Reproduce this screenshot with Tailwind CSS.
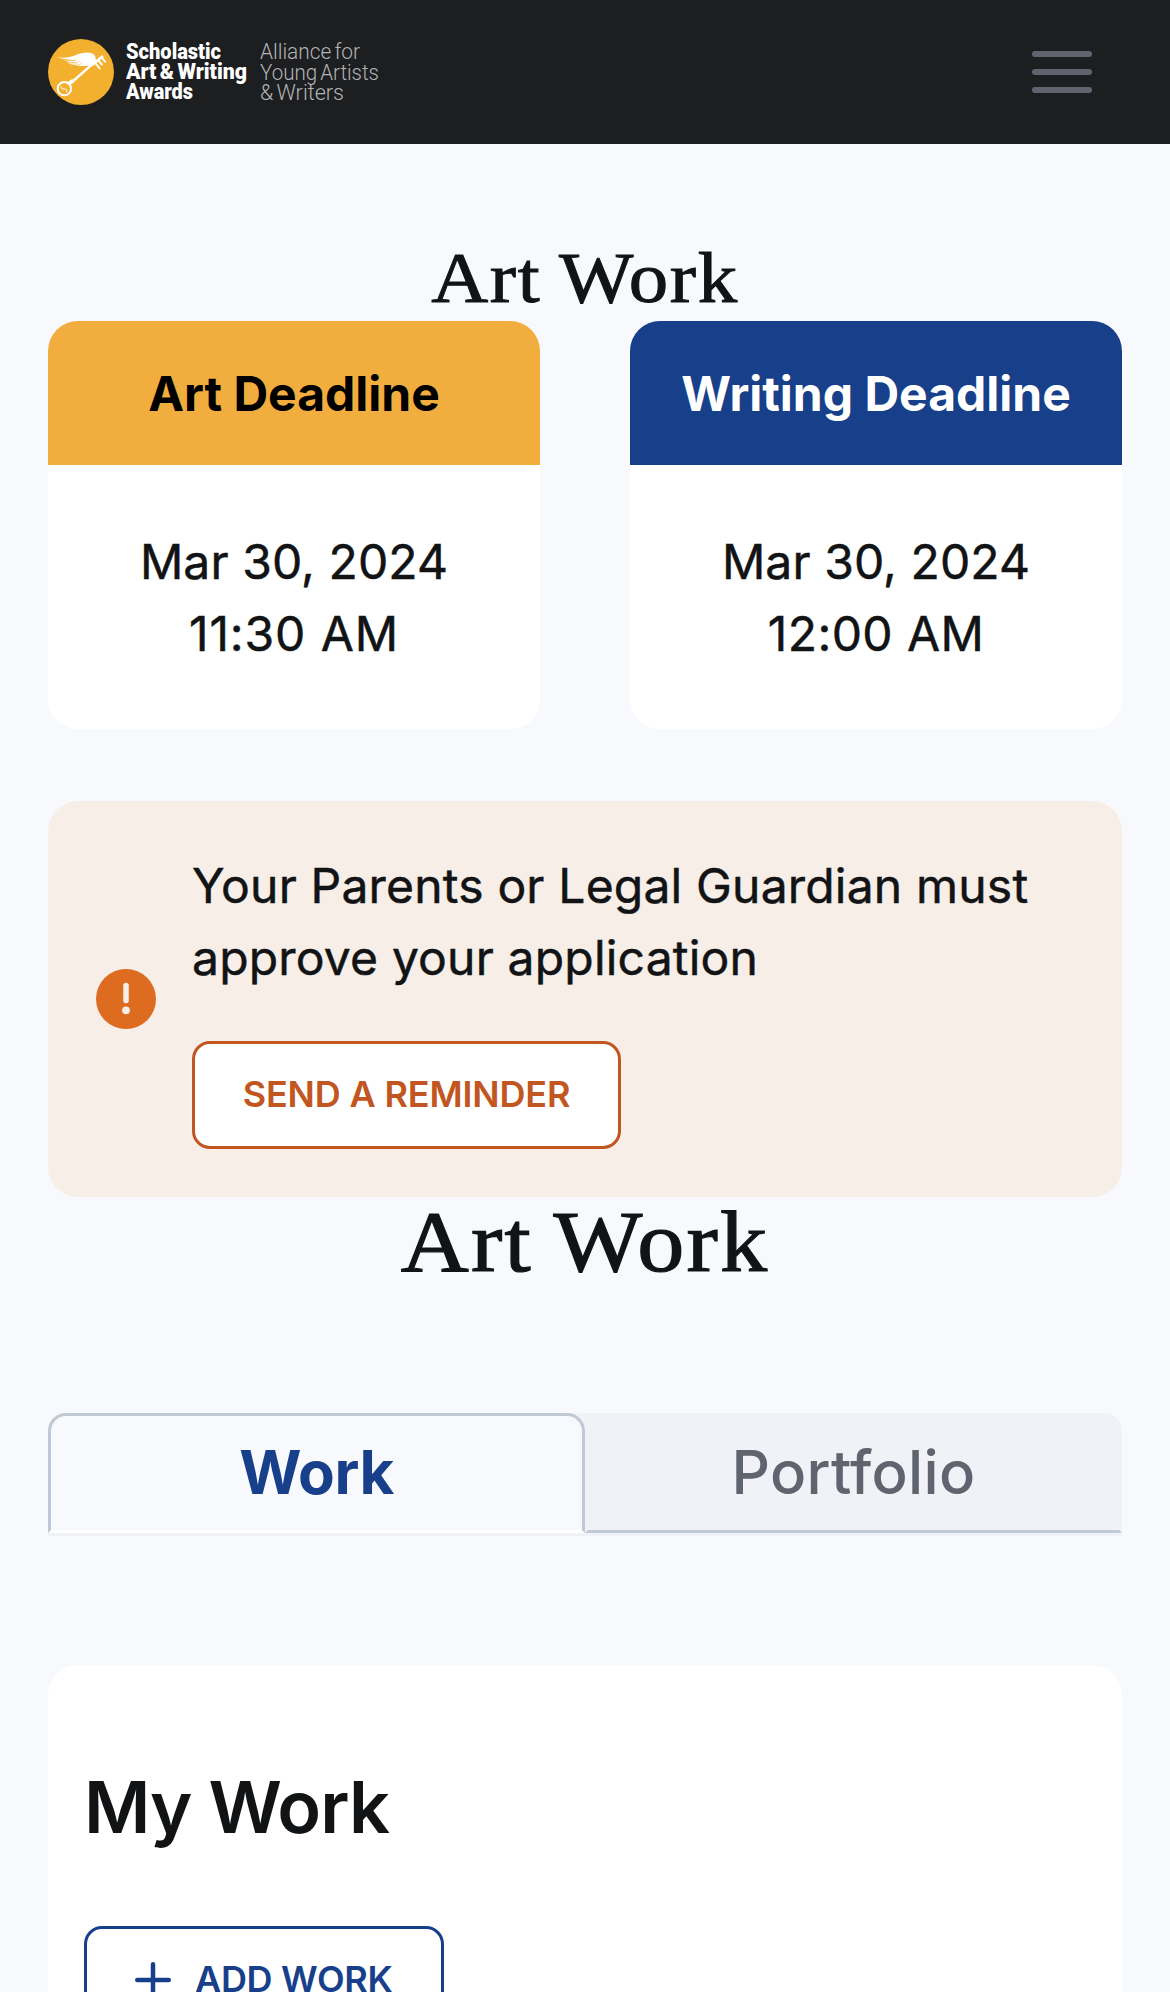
<!DOCTYPE html>
<html lang="en">
<head>
<meta charset="utf-8">
<title>Art Work</title>
<script src="https://cdn.jsdelivr.net/npm/@tailwindcss/browser@4"></script>
</head>
<body class="bg-[#f8f9fd] text-[#111315] font-['Inter',sans-serif] h-[1992px] overflow-hidden">
<header class="h-36 bg-[#1d1e20] flex items-center justify-between pl-12 pr-[78px]">
  <div class="flex items-center">
    <svg class="w-[66px] h-[66px]" viewBox="54 57 198 198">
      <circle cx="153" cy="156" r="99" fill="#f3af2e"/>
      <path fill="#fff" d="M78 111c22 4 42 2 58-5 14-6 28-9 42-8 11 1 17 6 18 13l2 10-12 14c-10 4-26 4-40 2-14-1-28-5-36-10 12 3 24 4 34 2-18 0-34-4-46-10 14 3 30 4 42 1-20 1-42-2-62-9z"/>
      <path d="M96 119c14 4 30 4 44 0M108 127c14 3 28 3 40-2M126 135c10 1 22 0 30-5" fill="none" stroke="#f3af2e" stroke-width="1.500"/>
      <g stroke="#fff" fill="none">
        <path d="M126 186L190 130" stroke-width="7"/>
        <path d="M186 135L219 108" stroke-width="8"/>
        <path d="M196 129l14 18M205 121l12 14M215 113l12 14" stroke-width="6"/>
        <path d="M117 190l13-8" stroke-width="12"/>
        <circle cx="103" cy="206" r="20" stroke-width="6"/>
        <path d="M94 199c-2 8 3 8 9 8s9 3 6 9" stroke-width="3"/>
      </g>
      <path d="M130 190l14-12" stroke="#f3af2e" stroke-width="1.500"/>
    </svg>
    <svg class="ml-3 w-[260px] h-[66px] font-['Roboto',sans-serif] [word-spacing:-2px]" viewBox="126 39 260 66" font-size="21.5">
      <g fill="#fff" font-weight="900">
        <text x="126" y="58.500" textLength="95" lengthAdjust="spacingAndGlyphs">Scholastic</text>
        <text x="126" y="79" textLength="121" lengthAdjust="spacingAndGlyphs">Art &amp; Writing</text>
        <text x="126" y="99.200" textLength="67" lengthAdjust="spacingAndGlyphs">Awards</text>
      </g>
      <g fill="#b2b3b5" font-weight="300">
        <text x="260" y="59" textLength="100" lengthAdjust="spacingAndGlyphs">Alliance for</text>
        <text x="260" y="79.500" textLength="119" lengthAdjust="spacingAndGlyphs">Young Artists</text>
        <text x="260" y="100.300" textLength="84" lengthAdjust="spacingAndGlyphs">&amp; Writers</text>
      </g>
    </svg>
  </div>
  <button class="w-[60px] flex flex-col gap-3" aria-label="Menu">
    <span class="h-1.5 w-full rounded-full bg-[#60646e]"></span>
    <span class="h-1.5 w-full rounded-full bg-[#60646e]"></span>
    <span class="h-1.5 w-full rounded-full bg-[#60646e]"></span>
  </button>
</header>
<main class="px-12">
  <h2 class="h-[177px] pt-[93px] text-center text-[72px] leading-[83px] tracking-[1.5px] [word-spacing:-2px] scale-x-[1.095] font-['Liberation_Serif',serif] [-webkit-text-stroke:1px_#111315]">Art Work</h2>
  <div class="flex justify-between">
    <section class="w-[492px] h-[408px] rounded-[30px] overflow-hidden bg-white text-center text-5xl leading-[72px]">
      <h3 class="h-36 pt-[37px] bg-[#f1ad3d] text-black font-bold leading-[72px]">Art Deadline</h3>
      <p class="pt-[61px] [-webkit-text-stroke:0.5px_#111315] tracking-[0.1px]">Mar 30, 2024<br><span class="tracking-[0.9px]">11:30 AM</span></p>
    </section>
    <section class="w-[492px] h-[408px] rounded-[30px] overflow-hidden bg-white text-center text-5xl leading-[72px]">
      <h3 class="h-36 pt-[37px] bg-[#173f8a] text-white font-bold leading-[72px]">Writing Deadline</h3>
      <p class="pt-[61px] [-webkit-text-stroke:0.5px_#111315] tracking-[0.1px]">Mar 30, 2024<br><span class="tracking-[0.4px]">12:00 AM</span></p>
    </section>
  </div>
  <section class="mt-[72px] h-[396px] rounded-[30px] bg-[#f7eee8] flex items-center pl-12 gap-9">
    <svg class="w-[60px] h-[60px] shrink-0" viewBox="0 0 60 60"><circle cx="30" cy="30" r="30" fill="#de6c20"/><path d="M30 16.500v15" stroke="#f7eee8" stroke-width="5.500" stroke-linecap="round"/><circle cx="30" cy="41.300" r="3.900" fill="#f7eee8"/></svg>
    <div>
      <p class="pt-px text-5xl leading-[72px] tracking-[0.19px] [-webkit-text-stroke:0.5px_#111315]">Your Parents or Legal Guardian must<br>approve your application</p>
      <button class="mt-[47px] w-[429px] h-[108px] pb-0.5 block rounded-[18px] border-3 border-[#c25621] bg-white text-[#c25621] text-4xl font-semibold tracking-[-0.15px]">SEND A REMINDER</button>
    </div>
  </section>
  <h1 class="h-[216px] text-center text-[86px] leading-[91px] tracking-[2px] [word-spacing:-3px] scale-x-[1.095] font-['Liberation_Serif',serif] [-webkit-text-stroke:1.2px_#111315]">Art Work</h1>
  <nav class="h-[123px] flex rounded-t-[18px] bg-[#f1f2f7] text-center text-[60px] leading-[113px]">
    <a class="w-1/2 h-[120px] rounded-t-[18px] border-3 border-[#c1c8d6] border-b-white bg-[#f8f9fd] text-[#173f8a] font-bold tracking-[-0.4px]">Work</a>
    <a class="w-1/2 h-[120px] border-3 border-transparent border-b-[#c1c8d6] text-[#60646e] font-medium tracking-[0.3px]">Portfolio</a>
  </nav>
  <section class="mt-[129px] h-[400px] rounded-t-[30px] bg-white pl-9 pt-[97px]">
    <h2 class="text-[72px] leading-[90px] font-semibold tracking-[-1px]">My Work</h2>
    <button class="mt-[74px] w-[360px] h-[108px] flex items-center rounded-[18px] border-3 border-[#173f8a] pl-12 text-[#173f8a] text-4xl font-semibold tracking-[-0.3px]">
      <svg class="w-9 h-9 mr-6" viewBox="0 0 36 36" stroke="#173f8a" stroke-width="4.500" stroke-linecap="round"><path d="M18 2.250v31.500M2.250 18h31.500"/></svg><span class="pb-0.5">ADD WORK</span>
    </button>
  </section>
</main>
</body>
</html>
